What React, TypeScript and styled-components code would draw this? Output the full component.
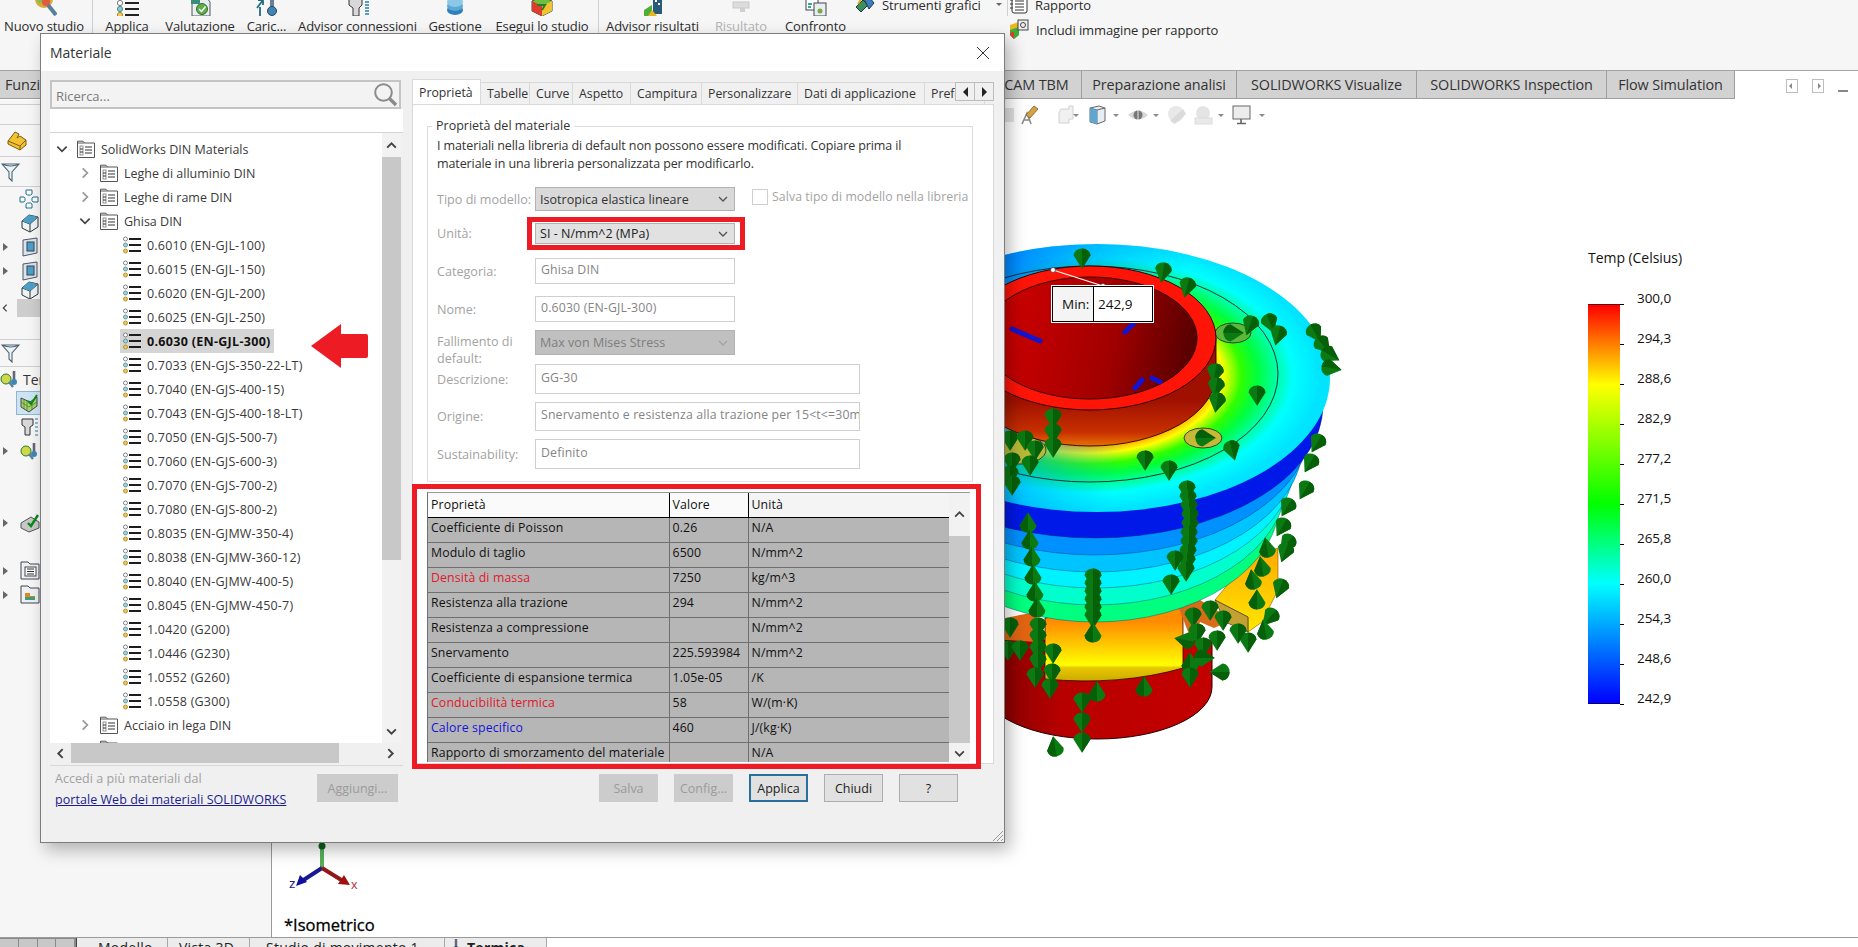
import React from "react";
import styled, { createGlobalStyle } from "styled-components";

const Global = createGlobalStyle`
  html, body { margin: 0; padding: 0; background: #fff; }
  body { font-family: "Open Sans", "Noto Sans", sans-serif; font-size: 13px; color: #222; }
  * { box-sizing: border-box; }
`;

const Page = styled.div`
  position: relative; width: 1858px; height: 947px; overflow: hidden;
  display: flex; flex-direction: column; background: #fff;
`;

/* ---------- ribbon ---------- */
const Ribbon = styled.div`
  height: 71px; flex: none; display: flex; align-items: flex-start; overflow: hidden;
  background: #f6f6f6; border-bottom: 1px solid #a3a3a3;
`;
const RibbonItem = styled.div<{ $w: number; $off?: boolean }>`
  width: ${p => p.$w}px; flex: none; display: flex; flex-direction: column; align-items: center;
  margin-top: -10px; color: ${p => (p.$off ? "#b4b4b4" : "#2b2b2b")}; white-space: nowrap;
  font-size: 13px; letter-spacing: -0.1px;
  svg { display: block; width: 26px; height: 26px; margin-bottom: 1px; }
`;
const RibbonSep = styled.div<{ $w: number; $h?: number }>`
  width: ${p => p.$w}px; flex: none; height: ${p => p.$h ?? 40}px; display: flex; justify-content: center;
  &::before { content: ""; width: 1px; background: #d0d0d0; }
`;
const SideGroup = styled.div<{ $w: number }>`
  width: ${p => p.$w}px; flex: none; margin-top: -8px; display: flex; flex-direction: column;
`;
const SideRow = styled.div`
  height: 25px; display: flex; align-items: center; gap: 7px; white-space: nowrap; color: #2b2b2b; letter-spacing: -0.1px;
  svg { flex: none; }
`;
const Caret = styled.span`
  width: 0; height: 0; border-left: 3px solid transparent; border-right: 3px solid transparent;
  border-top: 3px solid #666; margin-left: 8px;
`;

/* ---------- command tabs ---------- */
const TabBar = styled.div`
  height: 29px; flex: none; display: flex; align-items: stretch; background: #fff;
`;
const CmdTab = styled.div<{ $w: number; $left?: boolean }>`
  width: ${p => p.$w}px; flex: none; background: #d2d2d2; border-right: 1px solid #9e9e9e; border-bottom: 1px solid #9e9e9e;
  height: 28px; display: flex; align-items: center; justify-content: ${p => (p.$left ? "flex-start" : "center")};
  padding-left: ${p => (p.$left ? 5 : 0)}px; white-space: nowrap;
  color: #333; font-size: 14.4px; letter-spacing: -0.1px; overflow: hidden;
`;
const WinBtns = styled.div`
  margin-left: auto; padding: 8px 9px 0 0; display: flex; gap: 14px; align-items: flex-start;
`;

/* ---------- workspace ---------- */
const Workspace = styled.div`
  flex: 1; min-height: 0; display: flex; position: relative;
`;
const Sidebar = styled.aside`
  width: 272px; flex: none; background: #f6f6f6; border-right: 1px solid #9a9a9a; overflow: hidden;
  display: flex; flex-direction: column;
`;
const PaneRow = styled.div<{ $h: number; $line?: boolean; $pad?: number }>`
  height: ${p => p.$h}px; flex: none; display: flex; align-items: center; position: relative;
  padding-left: ${p => p.$pad ?? 0}px; ${p => (p.$line ? "border-bottom: 1px solid #cfcfcf;" : "")}
`;
const Expander = styled.span`
  width: 0; height: 0; margin-right: 12px; margin-left: 3px; border-top: 4px solid transparent;
  border-bottom: 4px solid transparent; border-left: 5px solid #666;
`;
const TreeName = styled.span`
  font-size: 14px; color: #333; margin-left: 3px; white-space: nowrap;
`;
const SelectedIcon = styled.span`
  width: 26px; height: 24px; display: flex; align-items: center; justify-content: center;
  background: #cfe4f3; border: 1px solid #8fb6d6;
`;
const ScrollThumb = styled.span`
  flex: 1; height: 18px; background: #cdcdcd; margin-left: 7px;
`;
const Viewport = styled.main`
  flex: 1; position: relative; min-width: 0;
`;
const Hud = styled.div`
  display: flex; align-items: center; height: 20px; margin-top: 5px; padding-left: 724px;
`;
const HudSlot = styled.span<{ $ml?: number }>`
  display: flex; flex: none; margin-left: ${p => p.$ml ?? 0}px;
`;
const HudCaret = styled.span<{ $ml: number }>`
  width: 0; height: 0; flex: none; border-left: 3px solid transparent; border-right: 3px solid transparent;
  border-top: 3px solid #8a8a8a; margin-left: ${p => p.$ml}px;
`;
const Scene = styled.svg`
  position: absolute; left: 0; top: 0; width: 1586px; height: 836px; pointer-events: none;
`;
const Callout = styled.div`
  position: absolute; left: 780px; top: 186px; width: 101px; height: 36px; display: flex;
  background: #fff; border: 1px solid #000; outline: 1px solid #fff; font-size: 13.5px; color: #111;
`;
const CalloutCell = styled.span<{ $w: number; $bg: string; $pad: number }>`
  width: ${p => p.$w}px; display: flex; align-items: center; padding-left: ${p => p.$pad}px; background: ${p => p.$bg};
  & + & { border-left: 1px solid #000; }
`;
const Legend = styled.div`
  position: absolute; left: 1316px; top: 149px; width: 110px; color: #111;
`;
const LegendTitle = styled.div`
  font-size: 14px; line-height: 18px; white-space: nowrap; letter-spacing: -0.05px;
`;
const LegendBody = styled.div`
  margin-top: 37px; display: flex; height: 401px;
`;
const LegendBar = styled.div`
  width: 32px; height: 400px; border-top: 1px solid #600; border-bottom: 1px solid #006;
  background: linear-gradient(to bottom, #ff0000 0%, #ffff00 20%, #00ff00 50%, #00ffff 70%, #0000ff 100%);
`;
const LegendScale = styled.div`
  position: relative; margin-left: 0; flex: 1; display: flex; flex-direction: column; justify-content: space-between;
`;
const LegendTick = styled.div`
  height: 1px; position: relative; 
  &::before { content: ""; position: absolute; left: 0; top: 0; width: 4px; height: 1px; background: #000; }
`;
const LegendValue = styled.span`
  position: absolute; left: 17px; top: -15px; font-size: 13.5px; line-height: 18px; letter-spacing: -0.05px;
`;
const ViewName = styled.div`
  position: absolute; left: 12px; top: 813px; font-size: 16.5px; font-weight: 400; color: #000; -webkit-text-stroke: .3px #000;
`;

/* ---------- bottom tabs ---------- */
const BottomBar = styled.div`
  height: 10px; flex: none; display: flex; background: #fff; border-top: 1px solid #9a9a9a; overflow: visible;
`;
const BottomNav = styled.div`
  width: 77px; flex: none; background: #8a8a8a; border-right: 1px solid #444;
  display: grid; grid-template-columns: repeat(4, 1fr); gap: 1px; padding: 1px 2px 0 0;
`;
const BottomNavBtn = styled.span`
  background: #c8c8c8;
`;
const BottomTab = styled.div<{ $w: number; $active?: boolean; $pad: number }>`
  width: ${p => p.$w}px; flex: none; height: 24px; font-size: 14px; color: #222; padding-left: ${p => p.$pad}px;
  border-right: 1px solid #a8a8a8; line-height: 20px; white-space: nowrap; letter-spacing: .25px;
  background: #ececec; font-weight: ${p => (p.$active ? 700 : 400)}; display: flex; gap: 6px;
  svg { flex: none; margin-top: 1px; }
`;

/* ---------- dialog ---------- */
const Dialog = styled.section`
  position: absolute; left: 40px; top: 33px; width: 965px; height: 810px;
  background: #f0f0f0; border: 1px solid #7c7c7c; box-shadow: 5px 7px 16px rgba(0, 0, 0, .28);
  display: flex; flex-direction: column;
`;
const TitleBar = styled.header`
  height: 37px; flex: none; background: #fff; display: flex; align-items: center; justify-content: space-between;
  padding: 0 14px 0 9px; font-size: 14px; color: #333;
`;
const DialogBody = styled.div`
  flex: 1; display: flex; gap: 9px; padding: 9px 0 0 9px; min-height: 0;
`;
const LeftCol = styled.div`
  width: 353px; flex: none; display: flex; flex-direction: column;
`;
const SearchBox = styled.div`
  height: 29px; flex: none; display: flex; align-items: center; justify-content: space-between;
  background: #f3f3f3; border: 2px solid #c4c4c4; padding: 0 1px 0 4px; margin-right: 2px; color: #7a7a7a;
`;
const SearchHint = styled.span`
  padding-top: 2px;
`;
const TreePanel = styled.div`
  height: 657px; flex: none; display: flex; flex-direction: column; background: #f0f0f0; border-bottom: 1px solid #d8d8d8;
`;
const TreeHead = styled.div`
  height: 24px; flex: none; background: #fff; border-bottom: 1px solid #d4d4d4;
`;
const TreeMain = styled.div`
  height: 610px; flex: none; display: flex;
`;
const TreeList = styled.div`
  width: 332px; flex: none; background: #fff; overflow: hidden; padding-top: 4px;
`;
const TreeRow = styled.div<{ $level: number }>`
  height: 24px; display: flex; align-items: center; padding-left: ${p => 5 + p.$level * 23}px;
`;
const Twist = styled.span`
  width: 14px; height: 14px; flex: none; margin-right: 5px; display: flex; align-items: center; justify-content: center;
`;
const RowBody = styled.div<{ $sel?: boolean; $spacing?: number }>`
  height: 24px; display: flex; align-items: center; gap: 6px; padding: 0 ${p => (p.$sel ? 3 : 0)}px 0 3px;
  background: ${p => (p.$sel ? "#d5d5d5" : "transparent")}; color: ${p => (p.$sel ? "#111" : "#3a3a3a")};
  font-weight: ${p => (p.$sel ? 700 : 400)}; white-space: nowrap; font-size: 12.5px; letter-spacing: ${p => p.$spacing ?? 0}px;
`;
const VScroll = styled.div<{ $w: number }>`
  width: ${p => p.$w}px; flex: none; display: flex; flex-direction: column; align-items: stretch; background: #f2f2f2;
`;
const ScrollEnd = styled.div<{ $h: number }>`
  height: ${p => p.$h}px; flex: none; display: flex; align-items: center; justify-content: center;
`;
const VThumb = styled.div<{ $h: number }>`
  height: ${p => p.$h}px; flex: none; background: #c8c8c8;
`;
const ScrollFill = styled.div`
  flex: 1;
`;
const HScroll = styled.div`
  height: 20px; flex: none; display: flex; align-items: stretch; background: #f0f0f0; margin-right: 2px;
`;
const HEnd = styled.div<{ $w: number }>`
  width: ${p => p.$w}px; flex: none; display: flex; align-items: center; justify-content: center;
`;
const HThumb = styled.div`
  width: 268px; flex: none; background: #c8c8c8;
`;
const LeftFoot = styled.div`
  flex: 1; display: flex; justify-content: space-between; align-items: flex-start; padding: 8px 5px 0 5px;
`;
const FootText = styled.div`
  font-size: 12.5px; line-height: 21px; color: #a0a0a0; white-space: nowrap; margin-top: -6px; letter-spacing: .05px;
`;
const PortalLink = styled.a`
  display: block; color: #1b1b8f; text-decoration: underline; font-size: 12.5px; letter-spacing: .05px;
`;
const Btn = styled.div<{ $off?: boolean; $def?: boolean; $w?: number }>`
  height: 28px; width: ${p => (p.$w ? `${p.$w}px` : "auto")}; display: flex; align-items: center; justify-content: center;
  font-size: 12.5px; color: ${p => (p.$off ? "#9b9b9b" : "#222")};
  background: ${p => (p.$off ? "#cccccc" : "#e1e1e1")};
  border: ${p => (p.$def ? "2px solid #2a6f9c" : `1px solid ${p.$off ? "#cccccc" : "#adadad"}`)};
`;

const RightCol = styled.div`
  width: 582px; flex: none; display: flex; flex-direction: column; margin-top: -1px;
`;
const Tabs = styled.div`
  height: 25px; flex: none; display: flex; align-items: flex-end; position: relative; overflow: hidden;
`;
const Tab = styled.div<{ $w: number; $active?: boolean }>`
  width: ${p => p.$w}px; flex: none; height: ${p => (p.$active ? 25 : 22)}px; display: flex; align-items: center; padding-left: 6px;
  background: ${p => (p.$active ? "#fff" : "#f0f0f0")}; white-space: nowrap; overflow: hidden; color: #333;
  font-size: 12.3px; border-top: 1px solid #d9d9d9; border-right: 1px solid #d9d9d9;
  ${p => (p.$active ? "border-left: 1px solid #d9d9d9;" : "")}
`;
const TabArrows = styled.div`
  position: absolute; right: 0; top: 3px; width: 39px; height: 19px; display: flex; background: #f0f0f0; border: 1px solid #bdbdbd;
`;
const TabArrow = styled.span`
  flex: 1; display: flex; align-items: center; justify-content: center;
  & + & { border-left: 1px solid #bdbdbd; }
`;
const TabPanel = styled.div`
  height: 660px; flex: none; background: #fff; border: 1px solid #d9d9d9; padding: 12px 20px 0 14px; position: relative;
`;
const Group = styled.fieldset`
  margin: 0; padding: 0 0 0 9px; height: 365px; min-width: 0; border: 1px solid #dcdcdc; border-bottom-color: #e6e6e6; background: #fff;
`;
const GroupTitle = styled.legend`
  padding: 0 4px; margin-left: -5px; line-height: 18px; font-size: 12.5px; color: #333;
`;
const Note = styled.p`
  margin: 2px 0 0; font-size: 12.5px; line-height: 18px; color: #333; white-space: nowrap; letter-spacing: -0.1px;
`;
const FormRow = styled.div<{ $h: number; $top: number }>`
  height: ${p => p.$h}px; margin-top: ${p => p.$top}px; display: flex; align-items: center; position: relative;
`;
const Label = styled.div<{ $drop?: number }>`
  width: 98px; flex: none; font-size: 12.6px; line-height: 17px; color: #a3a3a3; white-space: nowrap;
  margin-top: ${p => p.$drop ?? 0}px;
`;
const SelectWrap = styled.div`
  width: 200px; height: 100%; flex: none; position: relative;
`;
const SelectBox = styled.div<{ $bg: string; $fg: string }>`
  width: 100%; height: 100%; display: flex; align-items: center; justify-content: space-between;
  padding: 0 5px 0 4px; background: ${p => p.$bg}; color: ${p => p.$fg}; border: 1px solid #b2b2b2; font-size: 12.5px; letter-spacing: .03px;
`;
const TextBox = styled.div<{ $w: number }>`
  width: ${p => p.$w}px; height: 100%; flex: none; display: flex; align-items: center; padding: 0 5px 4px; overflow: hidden;
  background: #fff; border: 1px solid #cfcfcf; color: #858585; font-size: 12.3px; white-space: nowrap; letter-spacing: .15px;
`;
const CheckWrap = styled.div`
  position: absolute; left: 315px; top: 1px; display: flex; align-items: center; gap: 4px; color: #a3a3a3; white-space: nowrap;
  font-size: 12.3px; letter-spacing: .08px;
`;
const CheckBoxMark = styled.span`
  width: 16px; height: 16px; border: 1px solid #cfcfcf; background: #fff;
`;
const RedFrame = styled.span<{ $l: number; $r: number; $t: number; $b: number }>`
  position: absolute; left: ${p => p.$l}px; right: ${p => p.$r}px; top: ${p => p.$t}px; bottom: ${p => p.$b}px;
  border: 5px solid #ed1c24; pointer-events: none;
`;
const TableWrap = styled.div`
  position: relative; width: 543px; height: 270px; margin-top: 10px; display: flex; border-top: 1px solid #9a9a9a; border-left: 1px solid #6f6f6f; background: #f0f0f0;
`;
const TableClip = styled.div`
  width: 521px; height: 269px; flex: none; overflow: hidden;
`;
const PropTable = styled.table`
  width: 521px; table-layout: fixed; border-collapse: collapse; font-size: 12.3px; color: #111; letter-spacing: .12px;
`;
const Th = styled.th<{ $w: number }>`
  width: ${p => p.$w}px; height: 24px; text-align: left; font-weight: 400; padding: 0 0 0 3px; background: #fafafa;
  border-right: 1px solid #000; border-bottom: 1px solid #000; white-space: nowrap; &:last-child { border-right: none; background: #f4f4f4; }
`;
const Td = styled.td<{ $color?: string }>`
  height: 25px; padding: 0 0 5px 3px; background: #b6b6b6; color: ${p => p.$color ?? "#111"}; white-space: nowrap; overflow: hidden;
  border-right: 1px solid #6f6f6f; border-bottom: 1px solid #6f6f6f; &:last-child { border-right: none; }
`;
const ButtonRow = styled.div`
  margin-top: 10px; padding-left: 187px; display: grid; grid-template-columns: repeat(5, 59px); column-gap: 16px;
`;
const Grip = styled.svg`
  position: absolute; right: 0; bottom: 0; width: 15px; height: 15px;
`;
const Arrow = styled.svg`
  position: absolute; left: 311px; top: 324px; width: 57px; height: 44px;
`;

/* ---------- icons ---------- */
const Chev = ({ d, c = "#555", s = 12, w = 1.4 }: { d: "u" | "d" | "l" | "r"; c?: string; s?: number; w?: number }) => {
  const pts = { u: "2,8 6,4 10,8", d: "2,4 6,8 10,4", l: "8,2 4,6 8,10", r: "4,2 8,6 4,10" }[d];
  return <svg width={s} height={s} viewBox="0 0 12 12"><polyline points={pts} fill="none" stroke={c} strokeWidth={w} /></svg>;
};
const Tri = ({ d }: { d: "l" | "r" }) => (
  <svg width="7" height="10" viewBox="0 0 7 10"><polygon points={d === "l" ? "6,0 6,10 1,5" : "1,0 1,10 6,5"} fill="#222" /></svg>
);
const FolderIcon = () => (
  <svg width="18" height="18" viewBox="0 0 18 18" style={{ flex: "none" }}>
    <path d="M.5 3 V1.2 H6 L7.5 3 H17.5 V17.5 H.5 Z M.5 3 H7.5" fill="#fff" stroke="#555" strokeWidth="1" />
    <rect x="3" y="6" width="3" height="9" fill="none" stroke="#777" strokeWidth=".8" />
    <path d="M3 9 H6 M3 12 H6 M8 7 H15 M8 10 H15 M8 13 H15" stroke="#333" strokeWidth="1" />
  </svg>
);
const MaterialIcon = () => (
  <svg width="18" height="18" viewBox="0 0 18 18" style={{ flex: "none" }}>
    <circle cx="2.5" cy="3" r="2" fill="#fff" stroke="#777" strokeWidth=".9" />
    <circle cx="2.5" cy="9" r="2" fill="#a9d3d3" stroke="#5b8d97" strokeWidth=".9" />
    <circle cx="2.5" cy="15" r="2" fill="#f0c850" stroke="#a88d30" strokeWidth=".9" />
    <path d="M6 3 H18 M6 9 H18 M6 15 H18" stroke="#1c1c1c" strokeWidth="1.8" />
  </svg>
);
const SearchIcon = () => (
  <svg width="25" height="25" viewBox="0 0 25 25">
    <circle cx="10.5" cy="10.5" r="8.3" fill="none" stroke="#8a8a8a" strokeWidth="2" />
    <path d="M16.5 16.5 L23 23" stroke="#8a8a8a" strokeWidth="3.4" />
  </svg>
);
const CloseIcon = () => (
  <svg width="14" height="14" viewBox="0 0 14 14"><path d="M1 1 L13 13 M13 1 L1 13" stroke="#333" strokeWidth="1" /></svg>
);

const ApplyIcon = () => (
  <svg viewBox="0 0 26 26"><circle cx="6" cy="13" r="2.6" fill="#fff" stroke="#777" /><circle cx="6" cy="19" r="2.6" fill="#8cc" stroke="#588" /><circle cx="6" cy="25" r="2.6" fill="#ec5" stroke="#a83" /><path d="M11 13 H25 M11 19 H25 M11 25 H25" stroke="#222" strokeWidth="2" /></svg>
);
const StudyIcon = () => (
  <svg viewBox="0 0 26 26"><circle cx="13" cy="9" r="9" fill="#d9a93a" /><circle cx="10" cy="8" r="5" fill="#7cc24a" /><circle cx="15" cy="12" r="4" fill="#e25b3f" /><path d="M17 15 L25 25" stroke="#5a7f9c" strokeWidth="4" /></svg>
);
const EvalIcon = () => (
  <svg viewBox="0 0 26 26"><path d="M5 8 H20 L23 12 V26 H5 Z" fill="#e9eef0" stroke="#556" /><circle cx="15" cy="19" r="5.5" fill="#5fae4a" stroke="#2f6f2c" /><path d="M12 19 L14.5 21.5 L18.5 16.5" stroke="#fff" strokeWidth="1.4" fill="none" /><rect x="4" y="7" width="9" height="7" fill="#3b8f7a" /></svg>
);
const LoadIcon = () => (
  <svg viewBox="0 0 26 26"><path d="M18 7 V20" stroke="#6a7f96" strokeWidth="4" /><circle cx="18" cy="21" r="4.5" fill="#3f86b8" stroke="#345" /><path d="M3 18 L9 10 M9 10 V15 M9 10 H4 M6 26 V17" stroke="#1f6f7f" strokeWidth="1.8" fill="none" /></svg>
);
const BoltIcon = () => (
  <svg viewBox="0 0 26 26"><path d="M4 9 H17 V15 L14 18 V26 H8 V18 L4 15 Z" fill="#d8d8d8" stroke="#333" /><path d="M20 9 h4 M20 12 h4 M20 15 h4 M20 18 h4 M20 21 h4 M20 24 h4" stroke="#2c7fa8" strokeWidth="1.5" /></svg>
);
const StackIcon = () => (
  <svg viewBox="0 0 26 26"><ellipse cx="13" cy="20" rx="8" ry="5" fill="#2f7fb8" /><ellipse cx="13" cy="16" rx="8" ry="5" fill="#5ba8d6" /><ellipse cx="13" cy="12" rx="8" ry="5" fill="#8cc8e6" /></svg>
);
const RunIcon = () => (
  <svg viewBox="0 0 26 26"><path d="M13 6 L23 11 V21 L13 26 L3 21 V11 Z" fill="#6fbf3f" stroke="#444" /><path d="M3 11 L13 16 V26 L3 21 Z" fill="#e03b2e" /><path d="M13 16 L23 11 V21 L13 26 Z" fill="#f2c230" /><path d="M8 15 h8 l-3 5" stroke="#2a7a2a" strokeWidth="2" fill="none" /></svg>
);
const AdvResIcon = () => (
  <svg viewBox="0 0 26 26"><rect x="13" y="8" width="9" height="16" fill="#2a5a7a" /><rect x="15" y="10" width="2" height="2" fill="#fff" /><rect x="18" y="13" width="2" height="2" fill="#fff" /><path d="M4 20 L12 15 V26 H4 Z" fill="#4fae3a" /><path d="M8 26 L12 20 L17 26 Z" fill="#e6b820" /></svg>
);
const ResultOffIcon = () => (
  <svg viewBox="0 0 26 26"><rect x="5" y="12" width="16" height="6" fill="#dcdcdc" stroke="#c8c8c8" /><rect x="12" y="18" width="5" height="4" fill="#cfcfcf" /></svg>
);
const CompareIcon = () => (
  <svg viewBox="0 0 26 26"><rect x="3" y="8" width="12" height="12" fill="#fff" stroke="#445" /><rect x="11" y="13" width="12" height="13" fill="#e8eef0" stroke="#445" /><path d="M5 14 h4 M5 17 h3" stroke="#3a8" strokeWidth="2" /><circle cx="17" cy="21" r="2.5" fill="#7a4" /></svg>
);
const GraphToolIcon = () => (
  <svg width="20" height="20" viewBox="0 0 20 20"><path d="M1 12 L8 5 L13 10 L6 17 Z" fill="#3a8f5a" stroke="#234" /><path d="M9 4 L14 2 L19 8 L14 14 Z" fill="#3b7fc0" stroke="#234" /><path d="M3 9 L7 3" stroke="#e0b020" strokeWidth="2" /></svg>
);
const ReportIcon = () => (
  <svg width="19" height="20" viewBox="0 0 19 20"><rect x="3" y="2" width="15" height="16" rx="2" fill="#fff" stroke="#333" /><path d="M6 6 H15 M6 9 H15 M6 12 H15 M6 15 H15" stroke="#333" /><path d="M1 5 h3 M1 9 h3 M1 13 h3" stroke="#333" /></svg>
);
const PicIcon = () => (
  <svg width="20" height="21" viewBox="0 0 20 21"><path d="M1 6 L10 3 V16 L5 20 L1 16 Z" fill="#e8b820" /><path d="M1 11 L10 8 V16 L5 20 L1 16 Z" fill="#3fae3a" /><path d="M1 14 L5 13 V20 L1 16 Z" fill="#e03b2e" /><rect x="9" y="1" width="10" height="10" fill="#eee" stroke="#444" /><circle cx="14" cy="6" r="2.5" fill="none" stroke="#444" /></svg>
);
const ThermoTab = () => (
  <svg width="10" height="16" viewBox="0 0 10 16"><path d="M5 0 V10" stroke="#667" strokeWidth="2.4" /><circle cx="5" cy="11" r="3.4" fill="#3f86b8" stroke="#345" /></svg>
);

const PaneIcon = ({ kind }: { kind: string }) => {
  const box = { width: 20, height: 20, viewBox: "0 0 20 20" };
  if (kind === "part") return <svg {...box}><path d="M1 10 L8 1 L12 3 L10 7 L13 5 L19 9 V14 L13 19 L1 13 Z" fill="#f2c230" stroke="#7c5d10" /><path d="M1 10 L13 15 L19 9 M13 15 V19" fill="none" stroke="#7c5d10" /></svg>;
  if (kind === "funnel") return <svg {...box}><path d="M1 2 H18 L11 10 V19 L8 16 V10 Z M1 2 Q10 6 18 2" fill="#eaf3f8" stroke="#4d6470" strokeWidth="1.1" /></svg>;
  if (kind === "mates") return <svg {...box}><path d="M7 1 h6 v4 l-1.5 1 h-3 L7 5 Z M1 8 h4 l1 1.5 v2 L5 13 H1 Z M14 8 h5 v5 h-5 l-1 -1.5 v-2 Z M7 15 l1.5 -1 h3 l1.5 1 v4 H7 Z" fill="#fff" stroke="#1e6f8c" /></svg>;
  if (kind === "solid") return <svg {...box}><path d="M2 8 L9 2 L18 4 L18 14 L10 19 L2 15 Z" fill="#eef3f6" stroke="#333" /><path d="M2 8 L10 11 L18 4 M10 11 V19" fill="none" stroke="#333" /><path d="M9 2 L18 4 L10 11 L2 8 Z" fill="#4d9fc8" /></svg>;
  if (kind === "frame") return <svg {...box}><path d="M3 3 L17 1 V16 L3 19 Z" fill="#d9e4ea" stroke="#556" /><rect x="7" y="5" width="7" height="9" fill="#4d9fc8" stroke="#345" /></svg>;
  if (kind === "thermo") return <svg {...box}><circle cx="6" cy="10" r="5" fill="#cfd84a" stroke="#2a7a2a" /><path d="M9 13 L13 18" stroke="#5a7f9c" strokeWidth="2.4" /><path d="M14 2 V11" stroke="#667" strokeWidth="2.6" /><circle cx="14" cy="13" r="3" fill="#3f86b8" /></svg>;
  if (kind === "mesh") return <svg {...box}><path d="M2 5 L11 9 L18 4 V13 L10 19 L2 14 Z" fill="#a6d26c" stroke="#445" /><path d="M5 7 V16 M8 8 V18 M13 8 V17 M2 9 L10 14 L18 9" stroke="#4a7a2a" strokeWidth=".7" fill="none" /><path d="M9 8 L12 11 L18 2" stroke="#0a8a1a" strokeWidth="2" fill="none" /></svg>;
  if (kind === "bolt") return <svg {...box}><path d="M2 2 H13 V8 L10 10 V18 H5 V10 L2 8 Z" fill="#d8d8d8" stroke="#333" /><path d="M15 2 h3 M15 6 h3 M15 10 h3 M15 14 h3 M15 18 h3" stroke="#2c7fa8" /></svg>;
  if (kind === "fixture") return <svg {...box}><path d="M1 10 L11 4 L19 9 V15 L9 19 L1 15 Z" fill="#c7c7c7" stroke="#555" /><path d="M8 10 L11 13 L18 2" stroke="#0a8a1a" strokeWidth="2.4" fill="none" /></svg>;
  if (kind === "folderdoc") return <svg {...box}><path d="M1 3 V1 H8 L10 3 H19 V18 H1 Z" fill="#eef0f2" stroke="#445" /><rect x="5" y="6" width="11" height="9" fill="#fff" stroke="#445" /><path d="M7 8 H14 M7 10.5 H14 M7 13 H14" stroke="#333" /></svg>;
  return <svg {...box}><path d="M1 3 V1 H8 L10 3 H19 V18 H1 Z" fill="#eef0f2" stroke="#445" /><path d="M5 14 V8 H10 V11 H15 V15 H5 Z" fill="#d98a20" /><rect x="5" y="12" width="10" height="3" fill="#3aa080" /></svg>;
};

const HudIcon = ({ kind }: { kind: string }) => {
  const box = { width: 22, height: 20, viewBox: "0 0 22 20" };
  if (kind === "pencil") return <svg {...box}><path d="M4 19 L9 8 L13 19 M6 15 H12" stroke="#8a8a8a" strokeWidth="1.6" fill="none" /><path d="M8 10 L16 1 L20 4 L12 13 Z" fill="#d8a040" stroke="#8a7040" /></svg>;
  if (kind === "page") return <svg {...box}><path d="M6 4 H14 V1 H18 V14 H14 V18 H4 V8 Z" fill="#f1f1f1" stroke="#d0d0d0" /></svg>;
  if (kind === "cube") return <svg {...box}><path d="M4 3 L13 1 L19 3 V16 L11 19 L4 17 Z" fill="#e6eef2" stroke="#667" /><path d="M4 3 L11 5 L19 3 M11 5 V19" fill="none" stroke="#667" /><path d="M4 3 L11 5 V19 L4 17 Z" fill="#5ea7cf" /></svg>;
  if (kind === "eye") return <svg {...box}><path d="M1 10 Q11 1 21 10 Q11 19 1 10 Z" fill="#d7d7d7" /><circle cx="11" cy="10" r="4.5" fill="#777" /><path d="M11 2 V18" stroke="#fff" strokeWidth=".8" /></svg>;
  if (kind === "ball") return <svg {...box}><circle cx="11" cy="9" r="8" fill="#e8e8e8" /><path d="M5 16 L18 4 L21 9 L10 19 Z" fill="#dadada" /></svg>;
  if (kind === "ball2") return <svg {...box}><circle cx="11" cy="8" r="7" fill="#e4e4e4" /><rect x="3" y="13" width="17" height="6" fill="#e9e9e9" stroke="#dcdcdc" /></svg>;
  if (kind === "mon") return <svg {...box}><rect x="2" y="1" width="17" height="13" fill="#ececec" stroke="#666" /><path d="M10 14 V18 M6 18.5 H15" stroke="#666" strokeWidth="1.6" /></svg>;
  return <svg {...box}><rect x="4" y="3" width="14" height="14" fill="#e2e2e2" /></svg>;
};

const WinBtn = ({ d }: { d: "l" | "r" }) => (
  <svg width="12" height="14" viewBox="0 0 12 14"><rect x=".5" y=".5" width="11" height="13" fill="#fff" stroke="#bdbdbd" /><polygon points={d === "l" ? "6,4 6,10 3,7" : "6,4 6,10 9,7"} fill="#888" /></svg>
);

/* ---------- 3D model (drawn, page coords) ---------- */
const fins = [
  { b: 622, rx: 185, ry: 122, c: "#00ff80" },
  { b: 605, rx: 192, ry: 125, c: "#00ffcc" },
  { b: 588, rx: 200, ry: 127, c: "#00f2ff" },
  { b: 572, rx: 208, ry: 129, c: "#00c4ff" },
  { b: 555, rx: 216, ry: 131, c: "#0090ff" },
  { b: 538, rx: 228, ry: 133, c: "#0018e8" },
];
type C = [number, number, number?];
const cones: C[] = [
  [1082, 258], [1163, 272, 10], [1187, 287, 15], [1250, 325, 20], [1270, 323, -20], [1278, 335, 15], [1315, 333, -30], [1323, 345, -40], [1330, 355, -60], [1331, 368, -80],
  [1215, 373, 10], [1216, 387, 10], [1217, 402, 10], [1257, 395], [1232, 450, -15], [1145, 460], [1169, 470],
  [1053, 418], [1053, 433], [1053, 447], [1010, 440], [1025, 440], [1035, 450], [1012, 462], [1030, 465], [1010, 475], [1012, 485],
  [1187, 490], [1188, 499], [1189, 508], [1190, 517], [1190, 526], [1189, 535], [1189, 544], [1188, 553], [1187, 562], [1186, 571],
  [1317, 443, 30], [1310, 463, 30], [1305, 490, 30], [1287, 507, 30], [1282, 527, 30], [1287, 543, 40], [1267, 548, 170], [1285, 552, 20], [1262, 567, 170],
  [1253, 580, 170], [1257, 600, 180], [1280, 588, 20], [1270, 617, 40], [1265, 630, 170], [1248, 642], [1238, 633], [1223, 620], [1210, 610], [1193, 617], [1197, 633], [1185, 640, 100], [1203, 647], [1217, 640], [1190, 663, 180], [1190, 677], [1220, 672, 90], [1204, 658, -90],
  [1028, 523, 180], [1030, 540, 180], [1032, 557, 180], [1033, 575, 180], [1035, 592, 180], [1037, 608, 180],
  [1093, 578], [1093, 586], [1093, 594], [1093, 602], [1093, 610], [1093, 618], [1093, 633, 180],
  [1038, 627], [1038, 638], [1038, 650], [1038, 662], [1053, 653], [1052, 673], [1050, 688], [1035, 677], [1082, 702], [1082, 722], [1082, 742], [1097, 692, 180], [1144, 687, 180], [1055, 747, 170],
  [1010, 627], [1008, 650], [1020, 650], [1175, 560], [1171, 584],
  [1233, 333, -90], [1205, 438, -90],
];

const Model = () => (
  <g>
    <defs>
      <linearGradient id="redCyl" gradientUnits="userSpaceOnUse" x1="1000" y1="0" x2="1212" y2="0">
        <stop offset="0" stopColor="#8a0000" /><stop offset=".3" stopColor="#b80000" /><stop offset="1" stopColor="#c40000" />
      </linearGradient>
      <linearGradient id="yellowCyl" gradientUnits="userSpaceOnUse" x1="0" y1="622" x2="0" y2="682">
        <stop offset="0" stopColor="#ff8c00" /><stop offset=".72" stopColor="#ffff00" /><stop offset=".76" stopColor="#e8c800" /><stop offset="1" stopColor="#c8a800" />
      </linearGradient>
      <linearGradient id="yellowBlock" x1="0" y1="0" x2="0" y2="1">
        <stop offset="0" stopColor="#ffa800" /><stop offset="1" stopColor="#ffe800" />
      </linearGradient>
      <radialGradient id="disk" gradientUnits="objectBoundingBox" cx=".48" cy=".49" r=".5">
        <stop offset=".5" stopColor="#ff8000" /><stop offset=".58" stopColor="#ffff00" /><stop offset=".66" stopColor="#30ff00" /><stop offset=".73" stopColor="#00ff40" />
        <stop offset=".82" stopColor="#00ffb0" /><stop offset=".88" stopColor="#00ffff" /><stop offset="1" stopColor="#00e4ff" />
      </radialGradient>
      <linearGradient id="diskBlue" gradientUnits="userSpaceOnUse" x1="1005" y1="240" x2="1180" y2="300">
        <stop offset="0" stopColor="#0080ff" /><stop offset="1" stopColor="#00a0ff" stopOpacity="0" />
      </linearGradient>
      <linearGradient id="hubSide" gradientUnits="userSpaceOnUse" x1="0" y1="400" x2="0" y2="446">
        <stop offset="0" stopColor="#a01000" /><stop offset=".7" stopColor="#c83000" /><stop offset="1" stopColor="#e87000" />
      </linearGradient>
      <linearGradient id="hole" gradientUnits="userSpaceOnUse" x1="1000" y1="300" x2="1197" y2="340">
        <stop offset="0" stopColor="#d00000" /><stop offset=".6" stopColor="#a00000" /><stop offset="1" stopColor="#550000" />
      </linearGradient>
    </defs>
    <path d="M982 640 V687 A115 52 0 0 0 1212 687 V640 Z" fill="url(#redCyl)" stroke="#200" strokeWidth="1" />
    <path d="M1045 618 L1183 600 V668 Q1120 686 1045 679 Z" fill="url(#yellowCyl)" stroke="#300" strokeWidth=".8" />
    <path d="M1005 618 L1036 612 L1038 642 L1005 640 Z" fill="#e26412" />
    <path d="M1178 606 L1200 600 L1232 620 L1214 628 L1200 622 L1192 642 Z" fill="#d96c1a" />
    <path d="M1215 600 L1248 560 L1278 548 V590 L1262 622 L1248 632 V617 Z" fill="url(#yellowBlock)" stroke="#7a5a00" strokeWidth=".6" />
    <path d="M1215 600 L1248 617 V632 L1225 622 Z" fill="#c4a030" stroke="#222" strokeWidth=".6" />
    {fins.map(f => (
      <ellipse key={f.b} cx={1095} cy={f.b - f.ry} rx={f.rx} ry={f.ry} fill={f.c} stroke="#002060" strokeOpacity=".35" strokeWidth="1" />
    ))}
    <ellipse cx={1097} cy={378} rx={233} ry={134} fill="url(#disk)" />
    <ellipse cx={1097} cy={378} rx={233} ry={134} fill="url(#diskBlue)" />
    <ellipse cx={1090} cy={374} rx={188} ry={108} fill="none" stroke="#102030" strokeWidth=".9" />
    <ellipse cx={1233} cy={333} rx={18} ry={10} fill="#5cb83a" stroke="#222" strokeWidth=".8" />
    <ellipse cx={1203} cy={438} rx={19} ry={10} fill="#c8b838" stroke="#222" strokeWidth=".8" />
    <ellipse cx={1020} cy={450} rx={26} ry={14} fill="#b8b838" stroke="#222" strokeWidth=".8" />
    <path d="M964 338 V374 A126 72 0 0 0 1216 374 V338 Z" fill="url(#hubSide)" stroke="#200" strokeWidth=".9" />
    <ellipse cx={1090} cy={338} rx={126} ry={72} fill="#ff1408" stroke="#300" strokeWidth="1" />
    <ellipse cx={1090} cy={338} rx={107} ry={61} fill="url(#hole)" stroke="#300" strokeWidth="1" />
    <path d="M1012 329 L1040 341 M1125 332 L1134 323 M1135 388 L1142 380 M1152 378 L1160 382" stroke="#1414d0" strokeWidth="5" strokeLinecap="round" />
    {cones.map(([x, y, r], i) => (
      <g key={i} transform={`translate(${x} ${y}) rotate(${r ?? 0}) scale(1.2)`}>
        <path d="M-7 -2 A7 6 0 0 1 7 -2 L0 9 Z" fill="#0b7a12" />
        <path d="M0 -8 A7 6 0 0 1 7 -2 L0 9 Z" fill="#066009" />
      </g>
    ))}
    <path d="M1053 270 L1103 286" stroke="#fff" strokeWidth="1.2" />
    <circle cx={1053} cy={270} r={2.5} fill="#fff" stroke="#333" strokeWidth=".7" />
    <circle cx={1103} cy={286} r={2.5} fill="#fff" stroke="#333" strokeWidth=".7" />
  </g>
);

const Triad = () => (
  <g>
    <path d="M322 868 V846" stroke="#58b058" strokeWidth="4" />
    <circle cx={322} cy={846} r={3.5} fill="#0d5f1d" />
    <path d="M322 868 L302 881" stroke="#1a1a90" strokeWidth="4" />
    <polygon points="296,886 300,875 307,882" fill="#1010a0" />
    <path d="M322 868 L343 881" stroke="#901818" strokeWidth="4" />
    <polygon points="350,885 338,884 344,875" fill="#a01010" />
    <text x="289" y="888" fontSize="13" fill="#222288" fontFamily="Liberation Sans">z</text>
    <text x="351" y="889" fontSize="13" fill="#b04040" fontFamily="Liberation Sans">x</text>
  </g>
);

/* ---------- data ---------- */
const ribbon = [
  { w: 88, t: "Nuovo studio", I: StudyIcon },
  { sep: 8 },
  { w: 62, t: "Applica", I: ApplyIcon },
  { w: 84, t: "Valutazione", I: EvalIcon },
  { w: 49, t: "Caric...", I: LoadIcon },
  { w: 133, t: "Advisor connessioni", I: BoltIcon },
  { w: 62, t: "Gestione", I: StackIcon },
  { w: 112, t: "Esegui lo studio", I: RunIcon },
  { sep: 1 },
  { w: 107, t: "Advisor risultati", I: AdvResIcon },
  { w: 70, t: "Risultato", I: ResultOffIcon, off: true },
  { w: 79, t: "Confronto", I: CompareIcon },
];
const cmdTabs: [string, number][] = [
  ["CAM TBM", 90], ["Preparazione analisi", 155], ["SOLIDWORKS Visualize", 180], ["SOLIDWORKS Inspection", 190], ["Flow Simulation", 128],
];
const materials = [
  "0.6010 (EN-GJL-100)", "0.6015 (EN-GJL-150)", "0.6020 (EN-GJL-200)", "0.6025 (EN-GJL-250)", "0.6030 (EN-GJL-300)",
  "0.7033 (EN-GJS-350-22-LT)", "0.7040 (EN-GJS-400-15)", "0.7043 (EN-GJS-400-18-LT)", "0.7050 (EN-GJS-500-7)", "0.7060 (EN-GJS-600-3)",
  "0.7070 (EN-GJS-700-2)", "0.7080 (EN-GJS-800-2)", "0.8035 (EN-GJMW-350-4)", "0.8038 (EN-GJMW-360-12)", "0.8040 (EN-GJMW-400-5)",
  "0.8045 (EN-GJMW-450-7)", "1.0420 (G200)", "1.0446 (G230)", "1.0552 (G260)", "1.0558 (G300)",
];
const tabs: [string, number][] = [
  ["Proprietà", 69], ["Tabelle", 49], ["Curve", 43], ["Aspetto", 58], ["Campitura", 71], ["Personalizzare", 96], ["Dati di applicazione", 127], ["Preferiti", 60],
];
const rows: { p: string; v: string; u: string; c?: string }[] = [
  { p: "Coefficiente di Poisson", v: "0.26", u: "N/A" },
  { p: "Modulo di taglio", v: "6500", u: "N/mm^2" },
  { p: "Densità di massa", v: "7250", u: "kg/m^3", c: "#e0182c" },
  { p: "Resistenza alla trazione", v: "294", u: "N/mm^2" },
  { p: "Resistenza a compressione", v: "", u: "N/mm^2" },
  { p: "Snervamento", v: "225.593984", u: "N/mm^2" },
  { p: "Coefficiente di espansione termica", v: "1.05e-05", u: "/K" },
  { p: "Conducibilità termica", v: "58", u: "W/(m·K)", c: "#e0182c" },
  { p: "Calore specifico", v: "460", u: "J/(kg·K)", c: "#1414d8" },
  { p: "Rapporto di smorzamento del materiale", v: "", u: "N/A" },
];
const legend = ["300,0", "294,3", "288,6", "282,9", "277,2", "271,5", "265,8", "260,0", "254,3", "248,6", "242,9"];

const Tree = () => (
  <TreeList>
    <TreeRow $level={0}><Twist><Chev d="d" c="#444" s={14} w={1.5} /></Twist><RowBody><FolderIcon />SolidWorks DIN Materials</RowBody></TreeRow>
    <TreeRow $level={1}><Twist><Chev d="r" c="#999" s={14} w={1.5} /></Twist><RowBody><FolderIcon />Leghe di alluminio DIN</RowBody></TreeRow>
    <TreeRow $level={1}><Twist><Chev d="r" c="#999" s={14} w={1.5} /></Twist><RowBody><FolderIcon />Leghe di rame DIN</RowBody></TreeRow>
    <TreeRow $level={1}><Twist><Chev d="d" c="#444" s={14} w={1.5} /></Twist><RowBody><FolderIcon />Ghisa DIN</RowBody></TreeRow>
    {materials.map(m => {
      const sel = m.startsWith("0.6030");
      return <TreeRow key={m} $level={2}><Twist /><RowBody $sel={sel} $spacing={sel ? 0.3 : 0.2}><MaterialIcon />{m}</RowBody></TreeRow>;
    })}
    <TreeRow $level={1}><Twist><Chev d="r" c="#999" s={14} w={1.5} /></Twist><RowBody><FolderIcon />Acciaio in lega DIN</RowBody></TreeRow>
    <TreeRow $level={1}><Twist /><RowBody><FolderIcon /></RowBody></TreeRow>
  </TreeList>
);

export default function App() {
  return (
    <Page>
      <Global />
      <Ribbon>
        {ribbon.map((r, i) =>
          r.sep ? <RibbonSep key={i} $w={r.sep} /> : (
            <RibbonItem key={i} $w={r.w!} $off={r.off}>{r.I && <r.I />}{r.t}</RibbonItem>
          )
        )}
        <SideGroup $w={150}>
          <SideRow><GraphToolIcon />Strumenti grafici<Caret /></SideRow>
        </SideGroup>
        <RibbonSep $w={4} $h={16} />
        <SideGroup $w={300}>
          <SideRow><ReportIcon />Rapporto</SideRow>
          <SideRow><PicIcon />Includi immagine per rapporto</SideRow>
        </SideGroup>
      </Ribbon>
      <TabBar>
        <CmdTab $w={992} $left>Funzioni</CmdTab>
        {cmdTabs.map(([t, w]) => <CmdTab key={t} $w={w}>{t}</CmdTab>)}
        <WinBtns>
          <WinBtn d="l" /><WinBtn d="r" />
          <svg width="11" height="14" viewBox="0 0 11 14"><path d="M0 12 H10" stroke="#888" strokeWidth="2" /></svg>
        </WinBtns>
      </TabBar>
      <Workspace>
        <Sidebar>
          <PaneRow $h={5} $line />
          <PaneRow $h={20} $line />
          <PaneRow $h={32} $line $pad={7}><PaneIcon kind="part" /></PaneRow>
          <PaneRow $h={30} $line $pad={1}><PaneIcon kind="funnel" /></PaneRow>
          <PaneRow $h={24} $pad={19}><PaneIcon kind="mates" /></PaneRow>
          <PaneRow $h={24} $pad={20}><PaneIcon kind="solid" /></PaneRow>
          <PaneRow $h={24} $pad={0}><Expander /><PaneIcon kind="frame" /></PaneRow>
          <PaneRow $h={24} $pad={0}><Expander /><PaneIcon kind="frame" /></PaneRow>
          <PaneRow $h={14} $pad={20}><PaneIcon kind="solid" /></PaneRow>
          <PaneRow $h={22} $pad={0}><Chev d="l" c="#444" s={10} w={1.5} /><ScrollThumb /></PaneRow>
          <PaneRow $h={21} $line />
          <PaneRow $h={27} $line $pad={1}><PaneIcon kind="funnel" /></PaneRow>
          <PaneRow $h={24} $pad={0}><PaneIcon kind="thermo" /><TreeName>Termica</TreeName></PaneRow>
          <PaneRow $h={24} $pad={16}><SelectedIcon><PaneIcon kind="mesh" /></SelectedIcon></PaneRow>
          <PaneRow $h={24} $pad={20}><PaneIcon kind="bolt" /></PaneRow>
          <PaneRow $h={24} $pad={0}><Expander /><PaneIcon kind="thermo" /></PaneRow>
          <PaneRow $h={48} />
          <PaneRow $h={24} $pad={0}><Expander /><PaneIcon kind="fixture" /></PaneRow>
          <PaneRow $h={24} />
          <PaneRow $h={24} $pad={0}><Expander /><PaneIcon kind="folderdoc" /></PaneRow>
          <PaneRow $h={24} $pad={0}><Expander /><PaneIcon kind="folderchart" /></PaneRow>
        </Sidebar>
        <Viewport>
          <Hud>
            <HudSlot><HudIcon kind="box" /></HudSlot>
            <HudSlot><HudIcon kind="pencil" /></HudSlot>
            <HudSlot $ml={15}><HudIcon kind="page" /></HudSlot>
            <HudCaret $ml={-4} />
            <HudSlot $ml={7}><HudIcon kind="cube" /></HudSlot>
            <HudCaret $ml={5} />
            <HudSlot $ml={8}><HudIcon kind="eye" /></HudSlot>
            <HudCaret $ml={4} />
            <HudSlot $ml={6}><HudIcon kind="ball" /></HudSlot>
            <HudSlot $ml={5}><HudIcon kind="ball2" /></HudSlot>
            <HudCaret $ml={4} />
            <HudSlot $ml={7}><HudIcon kind="mon" /></HudSlot>
            <HudCaret $ml={6} />
          </Hud>
          <Scene viewBox="272 100 1586 836">
            <Model />
            <Triad />
          </Scene>
          <Callout>
            <CalloutCell $w={40} $bg="#f4f4f4" $pad={9}>Min:</CalloutCell>
            <CalloutCell $w={59} $bg="#fff" $pad={4}>242,9</CalloutCell>
          </Callout>
          <Legend>
            <LegendTitle>Temp (Celsius)</LegendTitle>
            <LegendBody>
              <LegendBar />
              <LegendScale>
                {legend.map(v => <LegendTick key={v}><LegendValue>{v}</LegendValue></LegendTick>)}
              </LegendScale>
            </LegendBody>
          </Legend>
          <ViewName>*Isometrico</ViewName>
        </Viewport>
      </Workspace>
      <BottomBar>
        <BottomNav><BottomNavBtn /><BottomNavBtn /><BottomNavBtn /><BottomNavBtn /></BottomNav>
        <BottomTab $w={91} $pad={21}>Modello</BottomTab>
        <BottomTab $w={82} $pad={11}>Vista 3D</BottomTab>
        <BottomTab $w={195} $pad={16}>Studio di movimento 1</BottomTab>
        <BottomTab $w={102} $active $pad={6}><ThermoTab />Termica</BottomTab>
      </BottomBar>

      <Dialog>
        <TitleBar>Materiale<CloseIcon /></TitleBar>
        <DialogBody>
          <LeftCol>
            <SearchBox><SearchHint>Ricerca...</SearchHint><SearchIcon /></SearchBox>
            <TreePanel>
              <TreeHead />
              <TreeMain>
                <Tree />
                <VScroll $w={19}>
                  <ScrollEnd $h={24}><Chev d="u" c="#444" s={13} w={1.8} /></ScrollEnd>
                  <VThumb $h={403} />
                  <ScrollFill />
                  <ScrollEnd $h={24}><Chev d="d" c="#444" s={13} w={1.8} /></ScrollEnd>
                </VScroll>
              </TreeMain>
              <HScroll>
                <HEnd $w={21}><Chev d="l" c="#444" s={13} w={1.8} /></HEnd>
                <HThumb />
                <ScrollFill />
                <HEnd $w={21}><Chev d="r" c="#444" s={13} w={1.8} /></HEnd>
              </HScroll>
            </TreePanel>
            <LeftFoot>
              <FootText>Accedi a più materiali dal<PortalLink>portale Web dei materiali SOLIDWORKS</PortalLink></FootText>
              <Btn $off $w={81}>Aggiungi...</Btn>
            </LeftFoot>
          </LeftCol>
          <RightCol>
            <Tabs>
              {tabs.map(([t, w], i) => <Tab key={t} $w={w} $active={i === 0}>{t}</Tab>)}
              <TabArrows><TabArrow><Tri d="l" /></TabArrow><TabArrow><Tri d="r" /></TabArrow></TabArrows>
            </Tabs>
            <TabPanel>
              <Group>
                <GroupTitle>Proprietà del materiale</GroupTitle>
                <Note>I materiali nella libreria di default non possono essere modificati. Copiare prima il<br />materiale in una libreria personalizzata per modificarlo.</Note>
                <FormRow $h={24} $top={14}>
                  <Label>Tipo di modello:</Label>
                  <SelectWrap><SelectBox $bg="#d9d9d9" $fg="#333">Isotropica elastica lineare<Chev d="d" c="#555" /></SelectBox></SelectWrap>
                  <CheckWrap><CheckBoxMark />Salva tipo di modello nella libreria</CheckWrap>
                </FormRow>
                <FormRow $h={21} $top={12}>
                  <Label>Unità:</Label>
                  <SelectWrap>
                    <SelectBox $bg="#e1e1e1" $fg="#222">SI - N/mm^2 (MPa)<Chev d="d" c="#555" /></SelectBox>
                    <RedFrame $l={-8} $r={-10} $t={-6} $b={-6} />
                  </SelectWrap>
                </FormRow>
                <FormRow $h={26} $top={14}><Label>Categoria:</Label><TextBox $w={200}>Ghisa DIN</TextBox></FormRow>
                <FormRow $h={26} $top={12}><Label>Nome:</Label><TextBox $w={200}>0.6030 (EN-GJL-300)</TextBox></FormRow>
                <FormRow $h={25} $top={8}>
                  <Label $drop={14}>Fallimento di<br />default:</Label>
                  <SelectWrap><SelectBox $bg="#c0c0c0" $fg="#7e7e7e">Max von Mises Stress<Chev d="d" c="#a4a4a4" /></SelectBox></SelectWrap>
                </FormRow>
                <FormRow $h={30} $top={9}><Label>Descrizione:</Label><TextBox $w={325}>GG-30</TextBox></FormRow>
                <FormRow $h={29} $top={8}><Label>Origine:</Label><TextBox $w={325}>Snervamento e resistenza alla trazione per 15&lt;t&lt;=30mm</TextBox></FormRow>
                <FormRow $h={30} $top={8}><Label>Sustainability:</Label><TextBox $w={325}>Definito</TextBox></FormRow>
              </Group>
              <TableWrap>
                <TableClip>
                  <PropTable>
                    <thead>
                      <tr><Th $w={241}>Proprietà</Th><Th $w={79}>Valore</Th><Th $w={201}>Unità</Th></tr>
                    </thead>
                    <tbody>
                      {rows.map(r => (
                        <tr key={r.p}><Td $color={r.c}>{r.p}</Td><Td>{r.v}</Td><Td>{r.u}</Td></tr>
                      ))}
                    </tbody>
                  </PropTable>
                </TableClip>
                <VScroll $w={21}>
                  <ScrollEnd $h={43}><Chev d="u" c="#444" s={13} w={1.6} /></ScrollEnd>
                  <VThumb $h={207} />
                  <ScrollFill />
                  <ScrollEnd $h={20}><Chev d="d" c="#444" s={13} w={1.6} /></ScrollEnd>
                </VScroll>
                <RedFrame $l={-16} $r={-11} $t={-9} $b={-7} />
              </TableWrap>
            </TabPanel>
            <ButtonRow>
              <Btn $off>Salva</Btn>
              <Btn $off>Config...</Btn>
              <Btn $def>Applica</Btn>
              <Btn>Chiudi</Btn>
              <Btn>?</Btn>
            </ButtonRow>
          </RightCol>
        </DialogBody>
        <Grip viewBox="0 0 15 15"><path d="M14 4 L4 14 M14 8 L8 14 M14 12 L12 14" stroke="#999" strokeWidth="1" /></Grip>
      </Dialog>
      <Arrow viewBox="0 0 57 44"><path d="M0 22 L30 0 V10 H55 Q57 10 57 12 V32 Q57 34 55 34 H30 V44 Z" fill="#ed1c24" /></Arrow>
    </Page>
  );
}
